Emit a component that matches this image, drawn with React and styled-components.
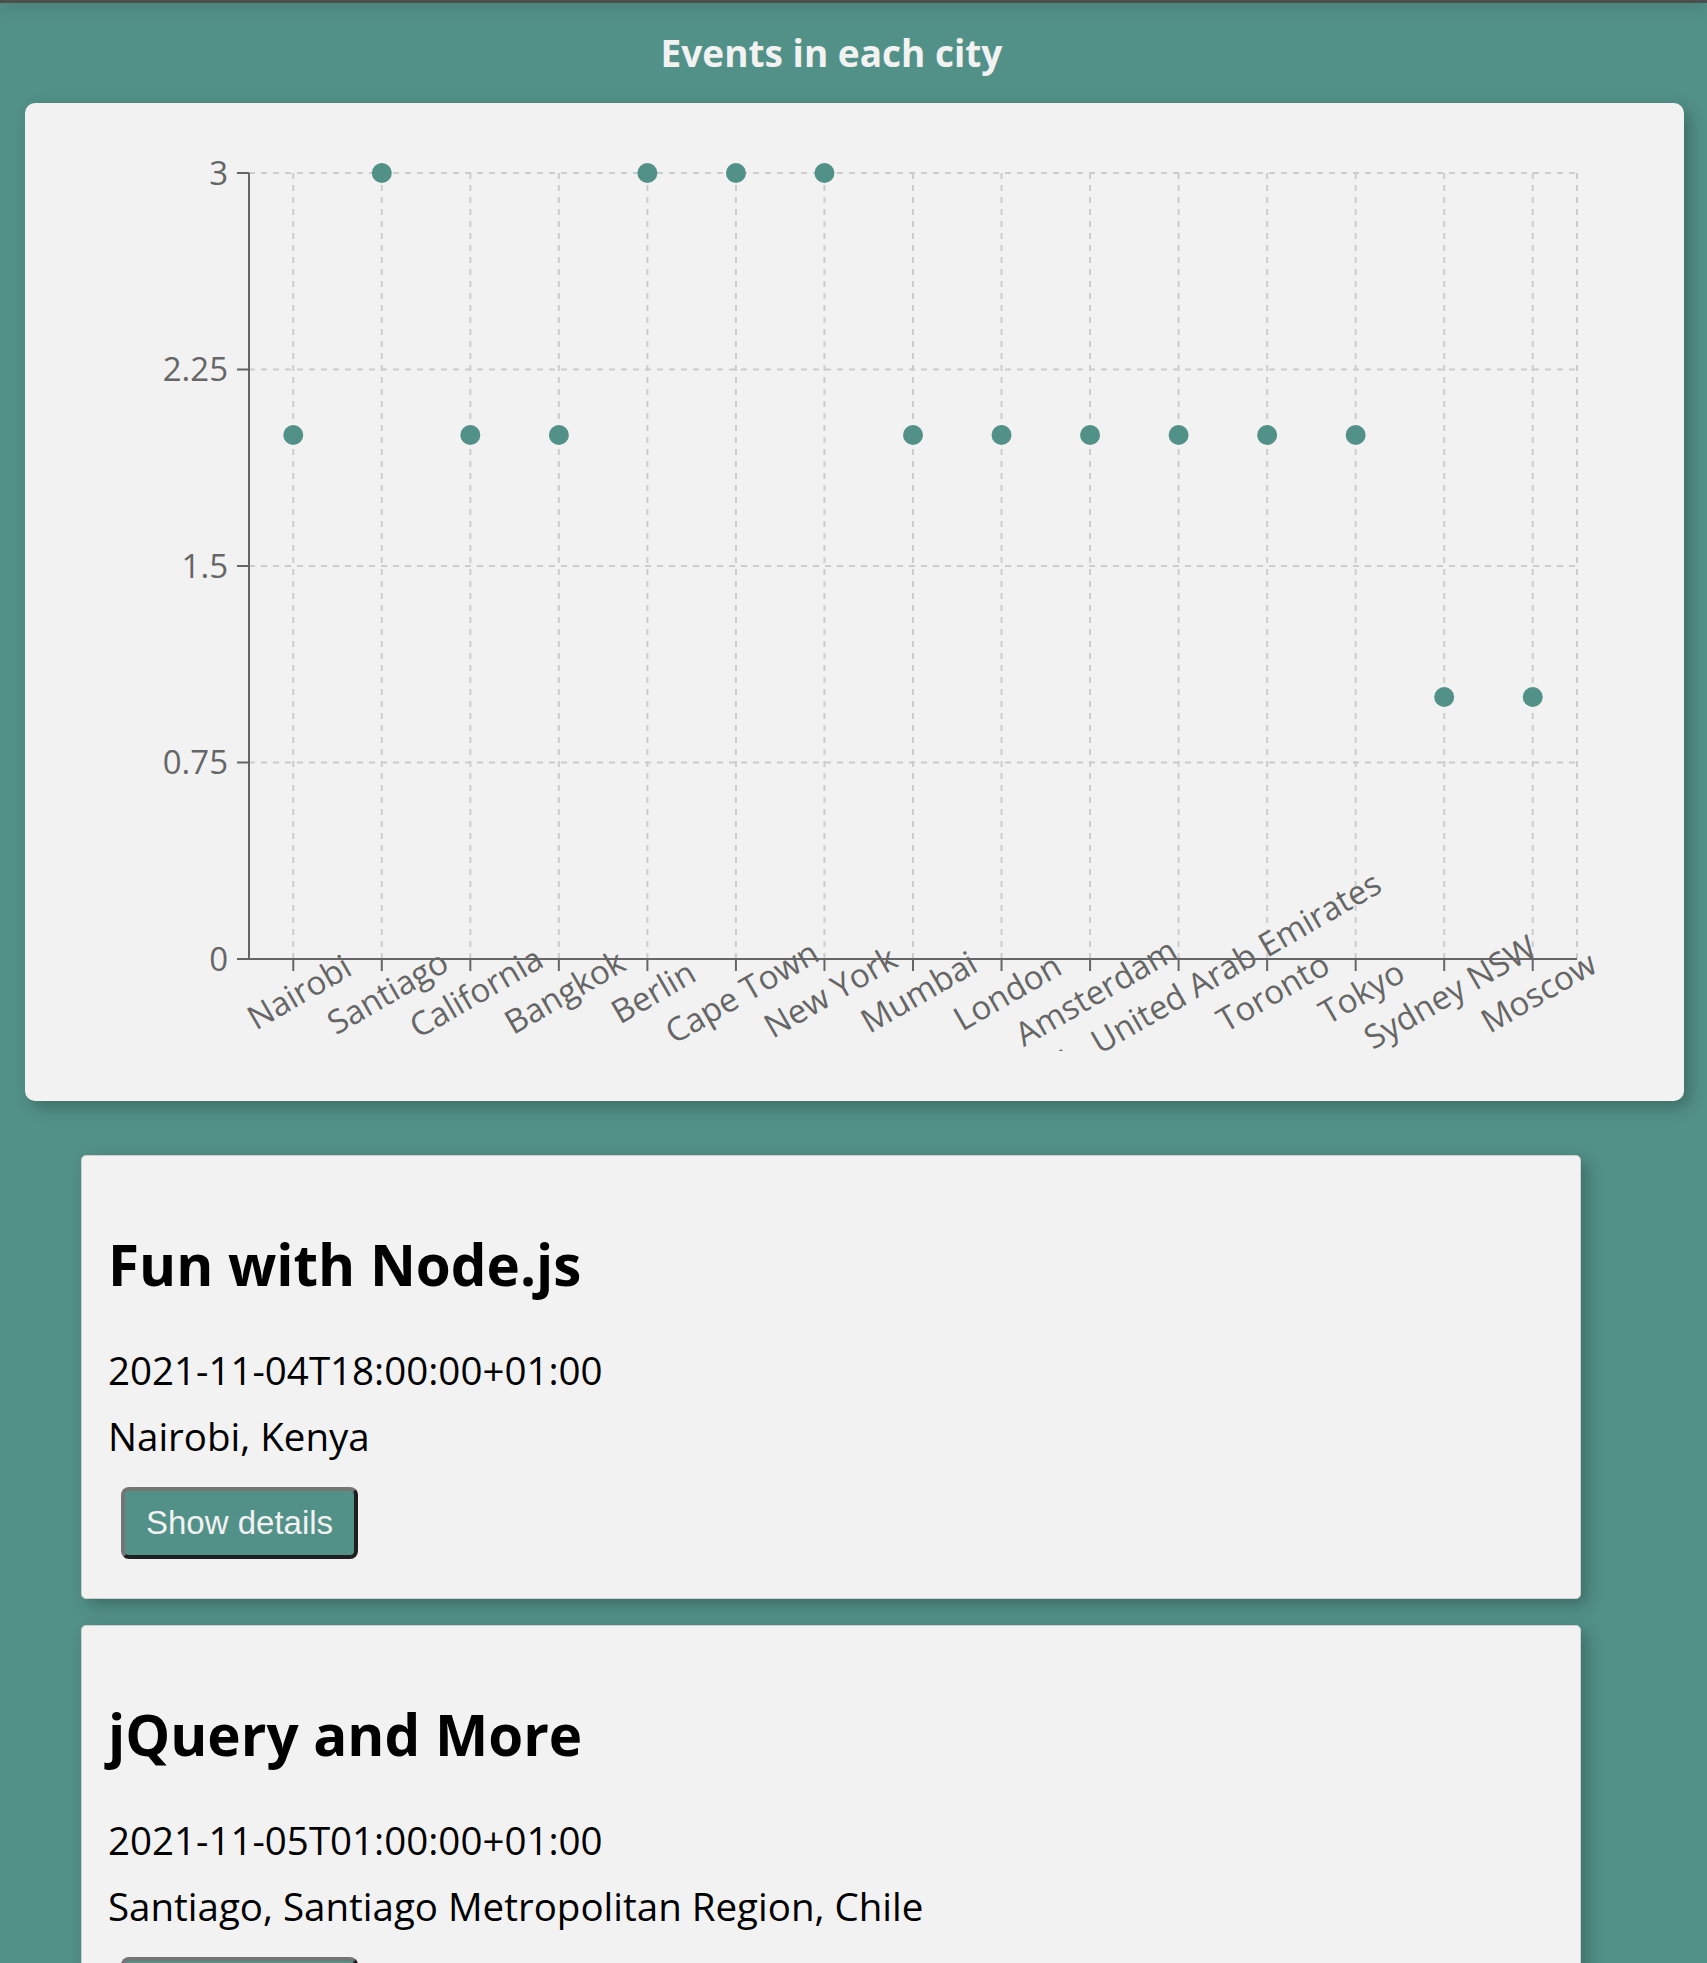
import React from 'react';
import styled, { createGlobalStyle } from 'styled-components';

const GlobalStyle = createGlobalStyle`
    body {
        margin: 0;
        background: #529188;
        font-family: 'Open Sans', 'Noto Sans', sans-serif;
    }
`;

const TopEdge = styled.div`
    height: 3px;
    background: #4b4f4e;
    box-shadow: 0 3px 14px rgba(0, 0, 0, 0.35);
`;

const Heading = styled.h4`
    margin: 24px 44px 0 0;
    text-align: center;
    color: #f2f2f2;
    font-size: 37px;
    font-weight: 700;
    line-height: 1.4;
`;

const ChartCard = styled.div`
    margin: 24px 23px 0 25px;
    padding-bottom: 50px;
    background: #f2f2f2;
    border-radius: 10px;
    box-shadow: 6px 6px 16px rgba(0, 0, 0, 0.25);
`;

const ChartSvg = styled.svg`
    display: block;
`;

const TickLabel = styled.text`
    font-family: 'Open Sans', 'Noto Sans', sans-serif;
    font-size: 33px;
    fill: #666666;
`;

const EventList = styled.ul`
    list-style: none;
    margin: 54px 0 0 81px;
    padding: 0;
    width: 1500px;
    display: flex;
    flex-direction: column;
    gap: 26px;
`;

const EventCard = styled.li`
    box-sizing: border-box;
    background: #f2f2f2;
    border: 1px solid #cfcfcf;
    border-radius: 5px;
    padding: 76px 26px 39px;
    box-shadow: 6px 6px 16px rgba(0, 0, 0, 0.25);
`;

const EventTitle = styled.h2`
    margin: 0;
    font-size: 56.5px;
    line-height: 66px;
    font-weight: 700;
    color: #000000;
`;

const EventLine = styled.p`
    margin: ${(p) => (p.$first ? '49px' : '20px')} 0 0;
    font-size: 38.5px;
    line-height: 46px;
    color: #000000;
`;

const DetailsButton = styled.button`
    display: block;
    box-sizing: border-box;
    margin: 28px 0 0 13px;
    height: 72px;
    padding: 0 21px;
    background: #529188;
    color: #f2f2f2;
    font-family: 'Liberation Sans', Arial, sans-serif;
    font-size: 33px;
    border-style: solid;
    border-width: 4px;
    border-color: #757575 #1f1f1f #1f1f1f #757575;
    border-radius: 8px;
    cursor: pointer;
`;

const cities = [
    ['Nairobi', 2],
    ['Santiago', 3],
    ['California', 2],
    ['Bangkok', 2],
    ['Berlin', 3],
    ['Cape Town', 3],
    ['New York', 3],
    ['Mumbai', 2],
    ['London', 2],
    ['Amsterdam', 2],
    ['Dubai - United Arab Emirates', 2],
    ['Toronto', 2],
    ['Tokyo', 2],
    ['Sydney NSW', 1],
    ['Moscow', 1],
];

const events = [
    {
        id: 1,
        summary: 'Fun with Node.js',
        start: '2021-11-04T18:00:00+01:00',
        location: 'Nairobi, Kenya',
    },
    {
        id: 2,
        summary: 'jQuery and More',
        start: '2021-11-05T01:00:00+01:00',
        location: 'Santiago, Santiago Metropolitan Region, Chile',
    },
];

const W = 1659;
const H = 948;
const X0 = 224;
const X1 = 1552;
const Y0 = 70;
const Y1 = 856;
const yTicks = [0, 0.75, 1.5, 2.25, 3];

const CityChart = () => {
    const band = (X1 - X0) / cities.length;
    const xOf = (i) => X0 + band * (i + 0.5);
    const yOf = (v) => Y1 - (v / 3) * (Y1 - Y0);

    return (
        <ChartSvg width={W} height={H}>
            <g stroke="#cccccc" strokeWidth="2" strokeDasharray="6 6" fill="none">
                {yTicks.map((t) => (
                    <line key={t} x1={X0} x2={X1} y1={yOf(t)} y2={yOf(t)} />
                ))}
                {cities.map((c, i) => (
                    <line key={c[0]} x1={xOf(i)} x2={xOf(i)} y1={Y0} y2={Y1} />
                ))}
                <line x1={X1} x2={X1} y1={Y0} y2={Y1} />
            </g>

            <g stroke="#666666" strokeWidth="2">
                <line x1={X0} x2={X0} y1={Y0} y2={Y1} />
                <line x1={X0} x2={X1} y1={Y1} y2={Y1} />
                {yTicks.map((t) => (
                    <line key={t} x1={X0 - 12} x2={X0} y1={yOf(t)} y2={yOf(t)} />
                ))}
                {cities.map((c, i) => (
                    <line key={c[0]} x1={xOf(i)} x2={xOf(i)} y1={Y1} y2={Y1 + 12} />
                ))}
            </g>

            {yTicks.map((t) => (
                <TickLabel key={t} x={X0 - 21} y={yOf(t)} dy="0.355em" textAnchor="end">
                    {t}
                </TickLabel>
            ))}

            {cities.map((c, i) => (
                <TickLabel
                    key={c[0]}
                    x={xOf(i)}
                    y={Y1 + 23}
                    dy="0.71em"
                    textAnchor="middle"
                    transform={`rotate(-30 ${xOf(i)} ${Y1 + 23})`}
                >
                    {c[0]}
                </TickLabel>
            ))}

            <g fill="#529188">
                {cities.map((c, i) => (
                    <circle key={c[0]} cx={xOf(i)} cy={yOf(c[1])} r="10" />
                ))}
            </g>
        </ChartSvg>
    );
};

const Event = ({ summary = '', start = '', location = '' }) => {
    return (
        <EventCard>
            <EventTitle>{summary}</EventTitle>
            <EventLine $first>{start}</EventLine>
            <EventLine>{location}</EventLine>
            <DetailsButton>Show details</DetailsButton>
        </EventCard>
    );
};

const App = () => {
    return (
        <>
            <GlobalStyle />
            <TopEdge />
            <Heading>Events in each city</Heading>
            <ChartCard>
                <CityChart />
            </ChartCard>
            <EventList>
                {events.map((e) => (
                    <Event key={e.id} {...e} />
                ))}
            </EventList>
        </>
    );
};

export default App;
